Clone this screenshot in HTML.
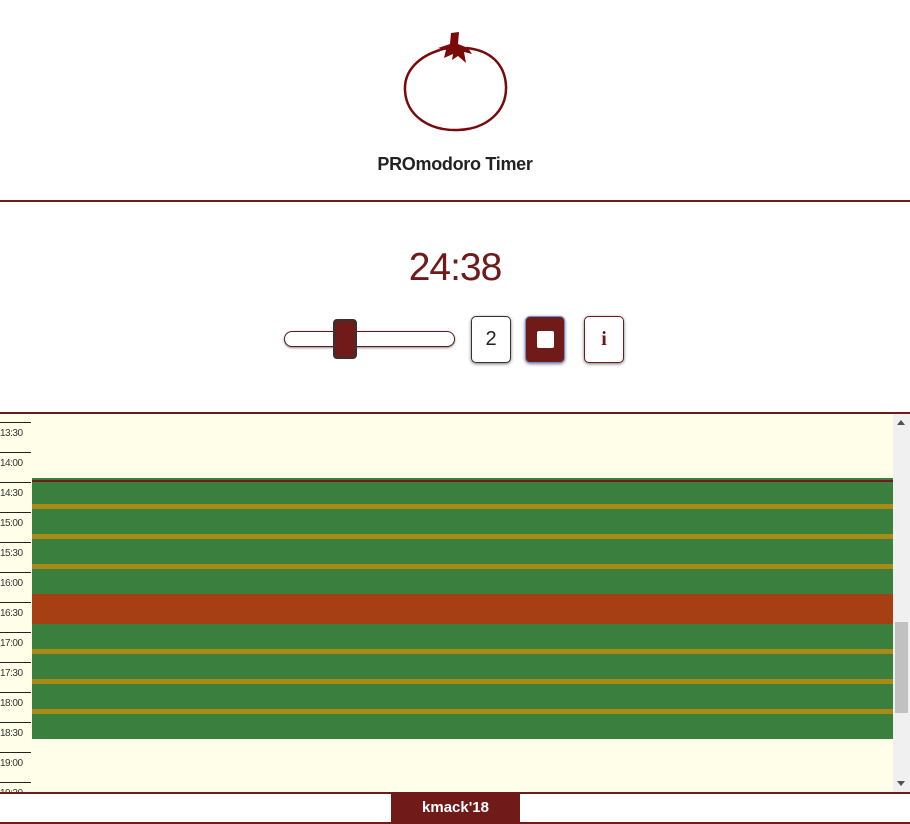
<!DOCTYPE html>
<html><head><meta charset="utf-8"><style>
*{margin:0;padding:0;box-sizing:border-box}
body{width:910px;height:824px;background:#fff;position:relative;overflow:hidden;font-family:"Liberation Sans",sans-serif}
.abs{position:absolute}
.title{left:0;width:910px;top:154px;text-align:center;font-size:18px;font-weight:bold;color:#222;letter-spacing:-0.3px}
.hr{left:0;width:910px;height:2px;background:#701a1a}
.time{left:0;width:910px;top:246px;text-align:center;font-size:39px;color:#701a1a;letter-spacing:-1px}
.track{left:284px;top:331px;width:171px;height:16px;border:1.5px solid #5a1a1a;border-radius:8px;background:#fff;box-shadow:0 1px 2px #888}
.thumb{left:333px;top:319px;width:24px;height:40px;background:#701a1a;border:2px solid #333;border-radius:4px}
.btn{top:316px;width:40px;height:47px;border-radius:5px;font-size:20px;text-align:center;line-height:45px;box-shadow:0 1px 3px #777}
.cal{left:0;top:414px;width:893px;height:379px;background:#fffee8;overflow:hidden}
.lbl{left:0;width:31px;border-top:1.5px solid #222;font-size:10px;color:#333;padding-top:5px;letter-spacing:-0.5px}
.ev{left:32px;width:861px}
.sb{left:893px;top:414px;width:17px;height:379px;background:#f0f0f0}
</style></head><body>
<svg class="abs" style="left:400px;top:30px" width="112" height="104" viewBox="0 0 112 104">
<path d="M40 20 C20 26 4 40 5 60 C6 86 30 101 58 100 C86 99 107 82 106 56 C105 34 90 20 66 18" fill="none" stroke="#7a0a0a" stroke-width="2.5"/>
<path d="M40 20 C46 18 50 17 54 17" fill="none" stroke="#7a0a0a" stroke-width="2.5"/>
<path d="M51 3 L59 2 L58 14 L68 18 L72 24 L64 22 L66 33 L58 26 L52 30 L53 24 L44 28 L46 20 L38 18 L50 14 Z" fill="#7a0a0a"/>
</svg>
<div class="abs title">PROmodoro Timer</div>
<div class="abs hr" style="top:200px"></div>
<div class="abs time">24:38</div>
<div class="abs track"></div>
<div class="abs thumb"></div>
<div class="abs btn" style="left:471px;border:1.5px solid #333;background:#fff;color:#222">2</div>
<div class="abs btn" style="left:525px;border:1.5px solid #6a8fd8;background:#701a1a"><div style="width:17px;height:17px;background:#fff;border-radius:2px;margin:14px auto 0"></div></div>
<div class="abs btn" style="left:584px;border:1.5px solid #701a1a;background:#fff;color:#701a1a;font-weight:bold;font-family:'Liberation Serif',serif">i</div>
<div class="abs hr" style="top:412px"></div>
<div class="abs cal">
<div class="abs ev" style="top:64px;height:261px;background:#3b7f3e"></div>
<div class="abs ev" style="top:66px;height:2px;background:#701a1a"></div>
<div class="abs ev" style="top:90px;height:5px;background:#a88a14"></div>
<div class="abs ev" style="top:120px;height:5px;background:#a88a14"></div>
<div class="abs ev" style="top:150px;height:5px;background:#a88a14"></div>
<div class="abs ev" style="top:180px;height:30px;background:#a63f14"></div>
<div class="abs ev" style="top:235px;height:5px;background:#a88a14"></div>
<div class="abs ev" style="top:265px;height:5px;background:#a88a14"></div>
<div class="abs ev" style="top:295px;height:5px;background:#a88a14"></div>
<div class="abs lbl" style="top:8px">13:30</div>
<div class="abs lbl" style="top:38px">14:00</div>
<div class="abs lbl" style="top:68px">14:30</div>
<div class="abs lbl" style="top:98px">15:00</div>
<div class="abs lbl" style="top:128px">15:30</div>
<div class="abs lbl" style="top:158px">16:00</div>
<div class="abs lbl" style="top:188px">16:30</div>
<div class="abs lbl" style="top:218px">17:00</div>
<div class="abs lbl" style="top:248px">17:30</div>
<div class="abs lbl" style="top:278px">18:00</div>
<div class="abs lbl" style="top:308px">18:30</div>
<div class="abs lbl" style="top:338px">19:00</div>
<div class="abs lbl" style="top:368px">19:30</div>
</div>
<div class="abs sb">
<div class="abs" style="left:4px;top:6px;width:0;height:0;border-left:4px solid transparent;border-right:4px solid transparent;border-bottom:5px solid #505050"></div>
<div class="abs" style="left:2px;top:208px;width:13px;height:91px;background:#c1c1c1"></div>
<div class="abs" style="left:4px;top:367px;width:0;height:0;border-left:4px solid transparent;border-right:4px solid transparent;border-top:5px solid #505050"></div>
</div>
<div class="abs hr" style="top:792px"></div>
<div class="abs" style="left:391px;top:794px;width:129px;height:28px;background:#701a1a;color:#fff;text-align:center;font-size:15px;font-weight:bold;line-height:28px">kmack'18</div>
<div class="abs hr" style="top:822px"></div>
</body></html>
